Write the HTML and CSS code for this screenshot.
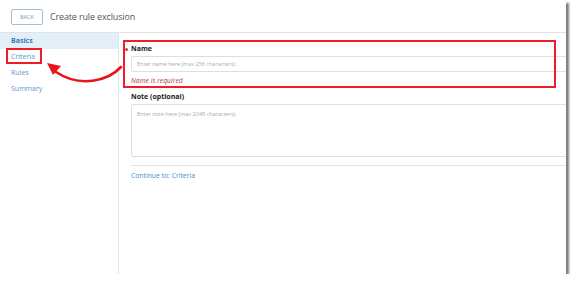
FILE: index.html
```html
<!DOCTYPE html>
<html lang="en">
<head>
    <meta charset="UTF-8">
    <title>Create rule exclusion</title>
    <link rel="stylesheet" href="styles.css">
</head>
<body>
    <div class="frame">
        <div class="header">
            <button class="back-button">BACK</button>
            <span class="title">Create rule exclusion</span>
        </div>
        <div class="content">
            <div class="sidebar">
                <div class="nav-item active">Basics</div>
                <div class="nav-item">Criteria</div>
                <div class="nav-item">Rules</div>
                <div class="nav-item">Summary</div>
            </div>
            <div class="main">
                <div class="field">
                    <label class="field-label required">Name</label>
                    <input type="text" class="text-input" placeholder="Enter name here (max 256 characters).">
                    <div class="error">Name is required</div>
                </div>
                <div class="field">
                    <label class="field-label">Note (optional)</label>
                    <textarea class="text-area" placeholder="Enter note here (max 2048 characters)."></textarea>
                </div>
                <div class="divider"></div>
                <a class="continue-link">Continue to: Criteria</a>
            </div>
        </div>

        <!-- annotations drawn on top of the screenshot -->
        <div class="mark mark-criteria"></div>
        <div class="mark mark-name"></div>
        <svg class="arrow" width="140" height="100" viewBox="0 0 140 100">
            <path d="M121 67 C 108 81, 80 88, 56 72" fill="none" stroke="#e8141b" stroke-width="2.6" stroke-linecap="round"/>
            <path d="M47 63 L 61 66 L 53 75 Z" fill="#e8141b"/>
        </svg>
    </div>
</body>
</html>
```

FILE: styles.css
```css
body {
    margin: 0;
    background-color: white;
    font-family: "Open Sans", "Noto Sans", sans-serif;
}
.frame {
    position: relative;
    width: 566px;
    height: 274px;
    background-color: white;
    box-shadow: 3px 3px 2px rgba(0, 0, 0, 0.5);
    display: flex;
    flex-direction: column;
    overflow: hidden;
}
.header {
    height: 33px;
    border-bottom: 1px solid #e3e3e3;
    display: flex;
    align-items: center;
    padding-left: 11px;
    box-sizing: border-box;
}
.back-button {
    width: 32px;
    height: 16px;
    padding: 0;
    border: 1px solid #9cc0d8;
    border-radius: 2px;
    background-color: white;
    color: #7a9bb3;
    font-family: "Open Sans", sans-serif;
    font-size: 5.5px;
    margin-top: 1px;
}
.title {
    margin-left: 7px;
    font-size: 9px;
    color: #555;
    letter-spacing: -0.15px;
}
.content {
    flex: 1;
    display: flex;
}
.sidebar {
    width: 118px;
    border-right: 1px solid #e3e3e3;
    flex-shrink: 0;
}
.nav-item {
    height: 16px;
    line-height: 16px;
    padding-left: 11px;
    font-size: 7px;
    color: #5a96cf;
}
.nav-item.active {
    background-color: #e2eff9;
    color: #3b78b7;
    font-weight: bold;
}
.main {
    flex: 1;
    padding-left: 12px;
    padding-top: 11px;
}
.field {
    display: flex;
    flex-direction: column;
}
.field-label {
    position: relative;
    font-size: 7px;
    line-height: 10px;
    font-weight: bold;
    color: #222;
    margin-bottom: 2px;
}
.required::before {
    content: "";
    position: absolute;
    left: -6px;
    top: 4px;
    width: 3px;
    height: 3px;
    border-radius: 50%;
    background-color: #d63a3a;
}
.text-input, .text-area {
    border: 1px solid #dedede;
    border-radius: 2px;
    padding: 0 5px;
    font-family: "Open Sans", sans-serif;
    font-size: 5.5px;
    box-sizing: border-box;
    margin-right: -4px;
}
.text-input {
    height: 16px;
}
.text-area {
    height: 53px;
    padding-top: 5px;
    resize: none;
}
.text-input::placeholder, .text-area::placeholder {
    color: #aaa;
}
.error {
    font-size: 6.8px;
    line-height: 10px;
    font-style: italic;
    color: #b53a3a;
    margin-top: 4px;
}
.field + .field {
    margin-top: 6px;
}
.divider {
    height: 1px;
    background-color: #e3e3e3;
    margin-top: 8px;
    margin-right: -4px;
}
.continue-link {
    display: block;
    font-size: 6.8px;
    line-height: 10px;
    color: #4a8bc7;
    margin-top: 5px;
}
.mark {
    position: absolute;
    border: 2px solid #ee1c24;
    box-sizing: border-box;
}
.mark-criteria {
    left: 6px;
    top: 48px;
    width: 36px;
    height: 16px;
}
.mark-name {
    left: 123px;
    top: 40px;
    width: 433px;
    height: 48px;
}
.arrow {
    position: absolute;
    left: 0;
    top: 0;
}
```
